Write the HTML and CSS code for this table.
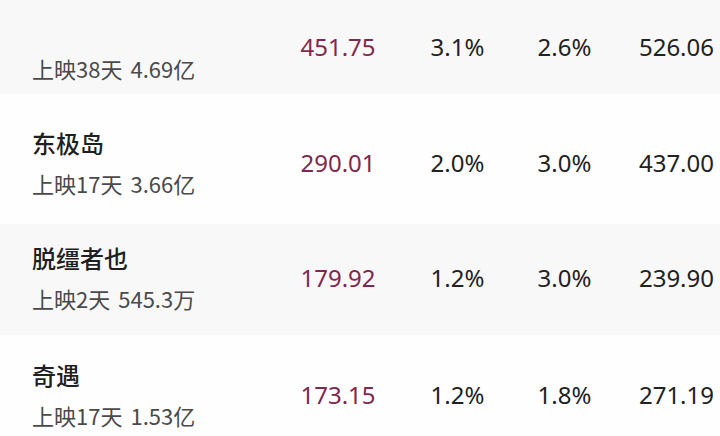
FILE: index.html
```html
<!DOCTYPE html>
<html lang="zh-CN">
<head>
<meta charset="utf-8">
<title>票房</title>
<link rel="stylesheet" href="styles.css">
</head>
<body>
<div class="table">
  <div class="row row-a gray">
    <div class="name">
      <div class="title">&nbsp;</div>
      <div class="sub"><span>上映38天</span><span>4.69亿</span></div>
    </div>
    <div class="num box">451.75</div>
    <div class="num">3.1%</div>
    <div class="num">2.6%</div>
    <div class="num last">526.06</div>
  </div>
  <div class="row row-b">
    <div class="name">
      <div class="title">东极岛</div>
      <div class="sub"><span>上映17天</span><span>3.66亿</span></div>
    </div>
    <div class="num box">290.01</div>
    <div class="num">2.0%</div>
    <div class="num">3.0%</div>
    <div class="num last">437.00</div>
  </div>
  <div class="row row-c gray">
    <div class="name">
      <div class="title">脱缰者也</div>
      <div class="sub"><span>上映2天</span><span>545.3万</span></div>
    </div>
    <div class="num box">179.92</div>
    <div class="num">1.2%</div>
    <div class="num">3.0%</div>
    <div class="num last">239.90</div>
  </div>
  <div class="row row-d">
    <div class="name">
      <div class="title">奇遇</div>
      <div class="sub"><span>上映17天</span><span>1.53亿</span></div>
    </div>
    <div class="num box">173.15</div>
    <div class="num">1.2%</div>
    <div class="num">1.8%</div>
    <div class="num last">271.19</div>
  </div>
</div>
</body>
</html>
```

FILE: styles.css
```css
html, body {
  margin: 0;
  padding: 0;
  background: #fefefe;
  overflow: hidden;
}

body {
  width: 720px;
  height: 436px;
  font-family: "Noto Sans", "Noto Sans CJK SC", sans-serif;
  color: #222;
}

.table {
  display: flex;
  flex-direction: column;
}

.row {
  display: grid;
  grid-template-columns: 280px 116px 123px 91px 1fr;
  align-items: center;
  box-sizing: border-box;
}

.gray {
  background: #f8f8f8;
}

.row-a { height: 94px; }
.row-b { height: 130px; padding-top: 7px; }
.row-c { height: 111px; padding-bottom: 4px; }
.row-d { height: 119px; }

.name {
  padding-left: 32px;
  display: flex;
  flex-direction: column;
  gap: 9px;
}

.title {
  font-family: "Noto Sans CJK SC", sans-serif;
  font-size: 24px;
  font-weight: 500;
  line-height: 32px;
  color: #1f1f1f;
}

.sub {
  font-family: "Noto Sans CJK SC", sans-serif;
  font-size: 22px;
  line-height: 30px;
  color: #4a4a4a;
  display: flex;
  gap: 8px;
}

.num {
  font-size: 24px;
  line-height: 32px;
  text-align: center;
  color: #222;
}

.box {
  color: #80284f;
}

.last {
  text-align: right;
  padding-right: 6px;
}
```
